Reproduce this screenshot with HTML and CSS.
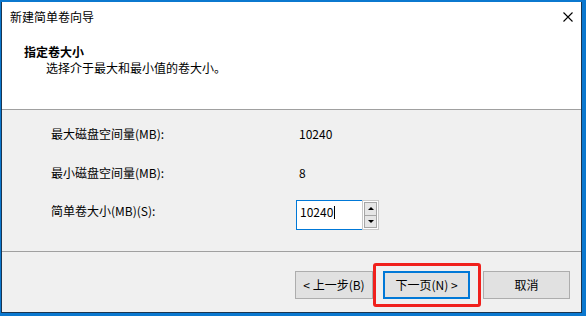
FILE: index.html
```html
<!DOCTYPE html>
<html lang="zh-CN">
<head>
<meta charset="utf-8">
<title>新建简单卷向导</title>
<link rel="stylesheet" href="styles.css">
</head>
<body>
<div class="window">
  <div class="header">
    <div class="titlebar">
      <span class="title">新建简单卷向导</span>
      <svg class="close" width="10" height="10" viewBox="0 0 10 10"><path d="M0.5 0.5L9.5 9.5M9.5 0.5L0.5 9.5" stroke="#000" stroke-width="1.1" fill="none"/></svg>
    </div>
    <div class="heading">指定卷大小</div>
    <div class="subheading">选择介于最大和最小值的卷大小。</div>
  </div>
  <div class="content">
    <div class="row r1"><span class="label">最大磁盘空间量(MB):</span><span class="value">10240</span></div>
    <div class="row r2"><span class="label">最小磁盘空间量(MB):</span><span class="value">8</span></div>
    <div class="row r3">
      <span class="label lab3">简单卷大小(MB)(S):</span>
      <div class="spin">
        <div class="field">10240<span class="caret"></span></div>
        <div class="arrows">
          <div class="abtn"><span class="tri up"></span></div>
          <div class="abtn"><span class="tri down"></span></div>
        </div>
      </div>
    </div>
  </div>
  <div class="footer">
    <button class="btn back">&lt; 上一步(B)</button>
    <button class="btn next">下一页(N) &gt;<span class="mark"></span></button>
    <button class="btn cancel">取消</button>
  </div>
</div>
</body>
</html>
```
FILE: styles.css
```css
html, body { margin: 0; padding: 0; }
body {
  width: 586px;
  height: 316px;
  background: #0b78cf;
  padding: 2px 0 0 1px;
  box-sizing: border-box;
  overflow: hidden;
  font-family: "Noto Sans CJK SC", "Noto Sans", sans-serif;
  font-size: 12px;
  color: #000;
}
.window {
  width: 581px;
  height: 311px;
  box-sizing: border-box;
  border: 1px solid #1b3550;
  border-top: none;
  display: flex;
  flex-direction: column;
  background: #f0f0f0;
}
.header {
  height: 108px;
  box-sizing: border-box;
  background: #fff;
  border-bottom: 1px solid #a0a0a0;
  flex: none;
}
.titlebar {
  height: 30px;
  display: flex;
  align-items: center;
  justify-content: space-between;
  padding: 0 8px 0 8px;
}
.title { line-height: 16px; }
.close { display: block; }
.heading {
  margin-top: 12px;
  padding-left: 22px;
  font-weight: bold;
  line-height: 16px;
}
.subheading {
  padding-left: 44px;
  line-height: 16px;
}
.content {
  height: 142px;
  box-sizing: border-box;
  flex: none;
  border-bottom: 1px solid #a0a0a0;
  padding: 14px 0 0 49px;
}
.row {
  display: flex;
  align-items: flex-start;
  line-height: 20px;
}
.label { width: 248px; flex: none; }
.r2 { margin-top: 19px; }
.r3 { margin-top: 17px; }
.lab3 { padding-top: 1px; width: 245px; }
.spin { display: flex; }
.field {
  width: 66px;
  height: 30px;
  border: 1px solid #0078d7;
  border-right: none;
  background: #fff;
  padding: 3px 0 0 3px;
  box-sizing: border-box;
  line-height: 16px;
  display: flex;
  align-items: flex-start;
}
.caret {
  width: 1px;
  height: 13px;
  background: #000;
  margin: 2px 0 0 1px;
}
.arrows {
  width: 17px;
  height: 30px;
  box-sizing: border-box;
  border: 1px solid #c8c8c8;
  padding: 1px;
  display: flex;
  flex-direction: column;
  background: #fff;
}
.abtn {
  flex: 1;
  border: 1px solid #a6a6a6;
  background: #e6e6e6;
  display: flex;
  align-items: center;
  justify-content: center;
}
.abtn + .abtn { border-top: none; }
.tri { width: 0; height: 0; border-left: 3px solid transparent; border-right: 3px solid transparent; }
.tri.up { border-bottom: 3px solid #000; }
.tri.down { border-top: 3px solid #000; }
.footer {
  flex: 1;
  display: flex;
  justify-content: flex-end;
  align-items: flex-start;
  padding: 19px 11px 0 0;
}
.btn {
  position: relative;
  height: 28px;
  box-sizing: border-box;
  border: 1px solid #adadad;
  background: #e1e1e1;
  font-family: inherit;
  font-size: 12px;
  color: #000;
  padding: 0;
  line-height: 16px;
}
.back { width: 78px; }
.next { width: 87px; margin-left: 10px; border: 2px solid #0078d7; }
.cancel { width: 87px; margin-left: 13px; }
.mark {
  position: absolute;
  left: -12px;
  top: -10px;
  right: -13px;
  bottom: -10px;
  border: 3px solid #f0201c;
  border-radius: 3px;
}
```
